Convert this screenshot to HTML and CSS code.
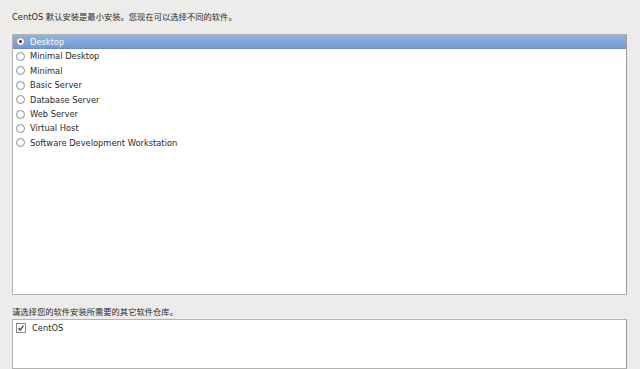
FILE: index.html
```html
<!DOCTYPE html>
<html lang="zh-CN">
<head>
    <meta charset="UTF-8">
    <title>CentOS 软件选择</title>
    <link rel="stylesheet" href="styles.css">
</head>
<body>
    <p class="label top">CentOS 默认安装是最小安装。您现在可以选择不同的软件。</p>

    <div class="box" id="groups">
        <div class="row selected"><span class="radio on"></span>Desktop</div>
        <div class="row"><span class="radio"></span>Minimal Desktop</div>
        <div class="row"><span class="radio"></span>Minimal</div>
        <div class="row"><span class="radio"></span>Basic Server</div>
        <div class="row"><span class="radio"></span>Database Server</div>
        <div class="row"><span class="radio"></span>Web Server</div>
        <div class="row"><span class="radio"></span>Virtual Host</div>
        <div class="row"><span class="radio"></span>Software Development Workstation</div>
    </div>

    <p class="label">请选择您的软件安装所需要的其它软件仓库。</p>

    <div class="box" id="repos">
        <div class="row">
            <span class="check">
                <svg width="8" height="8" viewBox="0 0 8 8"><path d="M1.6 4 L3.3 6 L6.4 1.6" fill="none" stroke="#333" stroke-width="1.2"/></svg>
            </span>CentOS
        </div>
    </div>
</body>
</html>
```

FILE: styles.css
```css
body { margin: 0; padding: 0 13px 0 12px; background-color: #edecea; font-family: "DejaVu Sans", "Noto Sans CJK SC", sans-serif; font-size: 8.3px; color: #2a2a2a; height: 369px; overflow: hidden; }

.label { margin: 0; height: 14px; line-height: 14px; }
.label.top { padding-top: 10px; height: 14px; margin-bottom: 10px; }

.box {
    background-color: #ffffff;
    border: 1px solid #b3b2ae;
    border-right-color: #9c9b98;
    box-sizing: border-box;
}
#groups { height: 261px; margin-bottom: 10px; }
#repos { height: 50px; padding-top: 1px; }

.row { height: 14.4px; line-height: 14.4px; padding-left: 3px; display: flex; align-items: center; white-space: nowrap; }
.row.selected { background: linear-gradient(#92b3df, #739bd2); color: #ffffff; border-bottom: 1px solid #6a8fc4; height: 13.4px; }

.radio { width: 7px; height: 7px; border: 1px solid #8a8a8a; border-radius: 50%; background-color: #fff; margin-right: 5px; display: inline-flex; align-items: center; justify-content: center; flex-shrink: 0; }
.radio.on::after { content: ""; width: 3px; height: 3px; border-radius: 50%; background-color: #333; }

.check { width: 8px; height: 8px; border: 1px solid #8a8a8a; background-color: #fff; margin-right: 6px; display: inline-flex; align-items: center; justify-content: center; flex-shrink: 0; }
.check svg { display: block; }
```
